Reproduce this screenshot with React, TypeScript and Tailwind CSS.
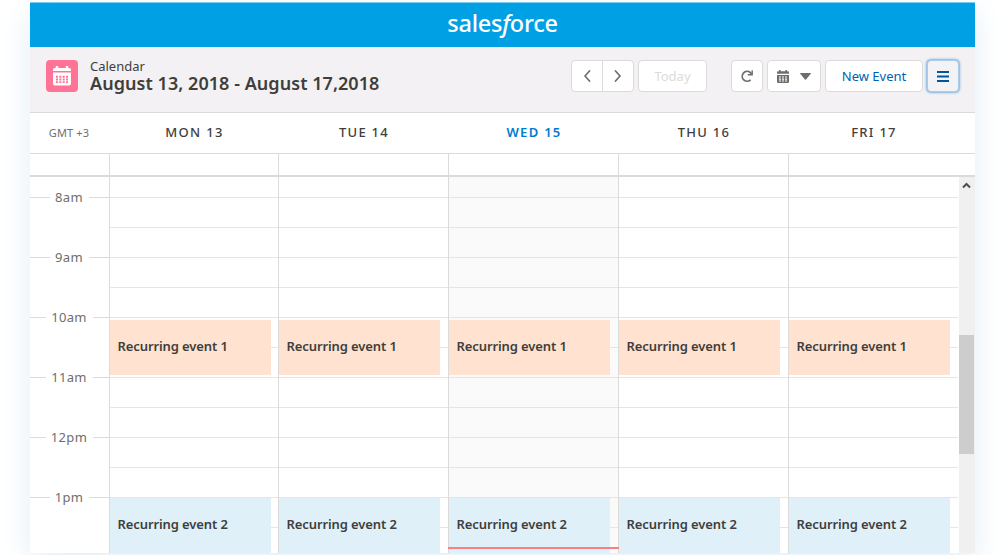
import type { ReactNode } from "react";

type Day = { label: string; width: string; today?: boolean };

const days: Day[] = [
  { label: "MON 13", width: "w-[169px]" },
  { label: "TUE 14", width: "w-[170px]" },
  { label: "WED 15", width: "w-[170px]", today: true },
  { label: "THU 16", width: "w-[170px]" },
  { label: "FRI 17", width: "w-[170px]" },
];
const hours = ["8am", "9am", "10am", "11am", "12pm", "1pm"];
const slots = Array.from({ length: 12 }, (_, i) => i);

function Button({ className, children, label }: { className: string; children: ReactNode; label?: string }) {
  return (
    <button
      aria-label={label}
      className={`flex h-8 shrink-0 items-center justify-center rounded border border-[#dddbda] bg-white text-[13px] whitespace-nowrap ${className}`}
    >
      {children}
    </button>
  );
}

function AppIcon() {
  return (
    <svg width="18" height="20" viewBox="0 0 18 20" fill="white">
      <path d="M3.500 0h1q.8 0 .8.8V2h7.400V.8q0-.8.8-.8h1q.8 0 .8.8V2h.9Q18 2 18 3.800V5H0V3.800Q0 2 1.800 2h.9V.8q0-.8.8-.8z" />
      <path
        fillRule="evenodd"
        d="M0 6.500h18v11q0 2-2 2H2q-2 0-2-2zM3 9.800v2h2v-2zM6.300 9.800v2h2v-2zM9.700 9.800v2h2v-2zM13 9.800v2h2v-2zM3 12.500v2h2v-2zM6.300 12.500v2h2v-2zM9.700 12.500v2h2v-2zM13 12.500v2h2v-2zM3 15.200v1.800h2v-1.800zM6.300 15.200v1.800h2v-1.800zM9.700 15.200v1.800h2v-1.800zM13 15.200v1.800h2v-1.800z"
      />
    </svg>
  );
}

function SmallCalendarIcon() {
  return (
    <svg width="12" height="13" viewBox="0 0 12 13" fill="#706e6b">
      <path d="M2 0h1.600v1.300h4.800V0H10v1.300h1q1 0 1 1V3.800H0V2.300q0-1 1-1h1z" />
      <path
        fillRule="evenodd"
        d="M0 5h12v7q0 1-1 1H1q-1 0-1-1zM2 6.400v1.200h2v-1.200zM5 6.400v1.200h2v-1.200zM8 6.400v1.200h2v-1.200zM2 8.500v1.200h2v-1.200zM5 8.500v1.200h2v-1.200zM8 8.500v1.200h2v-1.200zM2 10.600v1h2v-1zM5 10.600v1h2v-1zM8 10.600v1h2v-1z"
      />
    </svg>
  );
}

function Chevron({ d }: { d: string }) {
  return (
    <svg width="8" height="12" viewBox="0 0 8 12" fill="none" stroke="#706e6b" strokeWidth="1.700" strokeLinecap="round" strokeLinejoin="round">
      <path d={d} />
    </svg>
  );
}

function Toolbar() {
  return (
    <div className="flex h-[66px] items-start border-b border-[#dddbda] bg-[#f3f1f3] pt-[13px] pr-4 pl-4">
      <div className="flex size-8 items-center justify-center rounded bg-[#ff7396]">
        <AppIcon />
      </div>
      <div className="-mt-px ml-3 flex-1 text-[#3e3e3c]">
        <div className="h-[14px] text-[13px] leading-[14px]">Calendar</div>
        <div className="text-[18px] leading-[20px] font-semibold tracking-[0.05px] whitespace-nowrap">
          August 13, 2018 - August 17,2018
        </div>
      </div>
      <div className="flex">
        <Button className="w-8 rounded-r-none" label="Previous">
          <Chevron d="M6.500 1 2 6l4.500 5" />
        </Button>
        <Button className="-ml-px w-8 rounded-l-none" label="Next">
          <Chevron d="M1.500 1 6 6l-4.500 5" />
        </Button>
        <Button className="ml-1 w-[69px] pt-px text-[#dddbda]">Today</Button>
        <Button className="ml-6 w-8" label="Refresh">
          <svg width="14" height="14" viewBox="0 0 14 14" fill="none" stroke="#706e6b">
            <path strokeWidth="1.700" d="M10.600 10.800A4.900 4.900 0 1 1 10.200 3.500L12 5.200" />
            <path strokeWidth="1.400" d="M12.200 1.300v4.500H7.800" />
          </svg>
        </Button>
        <Button className="ml-1 w-[54px] gap-[11px]" label="Calendar view">
          <SmallCalendarIcon />
          <svg width="11" height="7" viewBox="0 0 11 7" fill="#706e6b">
            <path d="M.6 0h9.800q.8 0 .4.700L6 6.500q-.5.500-1 0L.2.700Q-.2 0 .6 0z" />
          </svg>
        </Button>
        <Button className="ml-1 w-[98px] pt-px text-[#005fb2]">New Event</Button>
        <button
          aria-label="Menu"
          className="ml-1 flex h-8 w-8 items-center justify-center rounded border border-[#a9cde8] bg-[#f3f2f4] shadow-[0_0_3px_#0070d2]"
        >
          <svg width="12" height="11" viewBox="0 0 12 11" fill="#00559f">
            <path d="M0 0h12v2H0zM0 4.500h12v2H0zM0 9h12v2H0z" />
          </svg>
        </button>
      </div>
    </div>
  );
}

function DayHeader() {
  return (
    <div className="flex h-[41px] items-center border-b border-[#dddbda] bg-white">
      <div className="w-[79px] pr-px text-center text-[11px] tracking-[0.15px] text-[#706e6b]">GMT +3</div>
      {days.map((d) => (
        <div
          key={d.label}
          className={`${d.width} pb-px pl-[2px] text-center text-[13px] tracking-[1.300px] ${
            d.today ? "font-semibold text-[#0079d0]" : "font-medium text-[#3e3e3c]"
          }`}
        >
          {d.label}
        </div>
      ))}
    </div>
  );
}

function CalendarEvent({ className, children }: { className: string; children: ReactNode }) {
  return (
    <div className={`absolute left-0 w-[161px] pl-[7.500px] text-[13px] font-semibold tracking-[-0.1px] text-[#3e3e3c] ${className}`}>
      {children}
    </div>
  );
}

function Grid() {
  return (
    <div className="flex h-[376px] overflow-hidden bg-white">
      <div className="w-[79px] pt-[11px]">
        {hours.map((h) => (
          <div key={h} className="flex h-[60px] items-start">
            <div className="mt-[9px] h-px flex-1 bg-[#dddbda]" />
            <span className="pr-[6px] pl-[5px] text-[13px] leading-[19px] tracking-[0.35px] text-[#706e6b]">{h}</span>
            <div className="mt-[9px] h-px flex-1 bg-[#dddbda]" />
          </div>
        ))}
      </div>
      {days.map((d) => (
        <div
          key={d.label}
          className={`relative h-[376px] border-l border-[#dddbda] pt-5 ${d.width} ${d.today ? "bg-[#fafafa]" : ""}`}
        >
          {slots.map((s) => (
            <div key={s} className="h-[30px] border-t border-[#e5e5e5]" />
          ))}
          <CalendarEvent className="top-[143px] h-[55px] bg-[#ffe2cf] leading-[52px]">Recurring event 1</CalendarEvent>
          <CalendarEvent className="top-[321px] h-[55px] bg-[#e0f0f9] leading-[52px]">Recurring event 2</CalendarEvent>
          {d.today && <div className="absolute top-[370px] -right-px -left-px z-10 h-[2px] bg-[#fa7f85]" />}
        </div>
      ))}
      <div className="ml-px flex flex-1 flex-col bg-[#f0f0f0] pt-1 pr-px">
        <svg className="mx-auto" width="9" height="8" viewBox="0 0 9 8" fill="none" stroke="#505050" strokeWidth="2">
          <path d="M1 6.500 4.500 3 8 6.500" />
        </svg>
        <div className="mt-[146px] h-[119px] bg-[#cdcdcd]" />
      </div>
    </div>
  );
}

export default function App() {
  return (
    <div className="h-[555px] w-[1008px] overflow-hidden bg-white px-[30px] pt-[2px] font-['Noto_Sans',sans-serif]">
      <div className="w-[945px] shadow-[0_10px_30px_#e3eef7]">
        <header className="flex h-[45px] justify-center border-t border-[#7ccdf0] bg-[#00a1e4] text-[23.500px] leading-[41px] font-medium tracking-[-0.25px] text-white">
          <span>
            sales<i>f</i>orce
          </span>
        </header>
        <Toolbar />
        <DayHeader />
        <div className="flex h-[23px] border-b-2 border-[#dddbda] bg-white pl-[79px]">
          {days.map((d) => (
            <div key={d.label} className={`border-l border-[#dddbda] ${d.width}`} />
          ))}
        </div>
        <Grid />
      </div>
    </div>
  );
}
